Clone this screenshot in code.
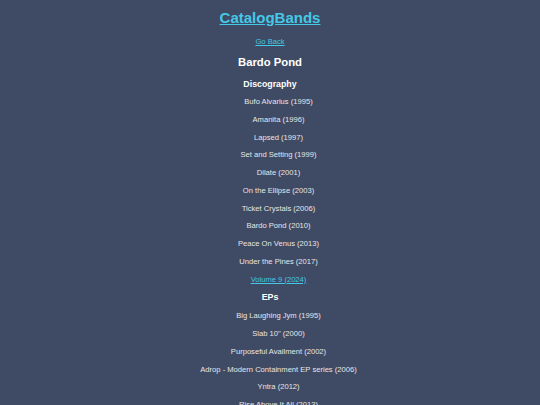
import React from "react";

const albums = [
  "Bufo Alvarius (1995)",
  "Amanita (1996)",
  "Lapsed (1997)",
  "Set and Setting (1999)",
  "Dilate (2001)",
  "On the Ellipse (2003)",
  "Ticket Crystals (2006)",
  "Bardo Pond (2010)",
  "Peace On Venus (2013)",
  "Under the Pines (2017)",
];

const eps = [
  "Big Laughing Jym (1995)",
  "Slab 10\" (2000)",
  "Purposeful Availment (2002)",
  "Adrop - Modern Containment EP series (2006)",
  "Yntra (2012)",
  "Rise Above It All (2013)",
];

const App = () => {
  return (
    <div className="min-h-[405px] bg-[#3f4a64] text-center font-['Liberation_Sans',Arial,sans-serif] text-[#e6e6e6]">
      <h1 className="h-[36px] leading-[36px] text-[15px] font-bold">
        <a href="#" className="text-[#45c8e6] underline">CatalogBands</a>
      </h1>
      <div className="h-[12px] leading-[12px] text-[7.6px]">
        <a href="#" className="text-[#45c8e6] underline">Go Back</a>
      </div>
      <h2 className="h-[28px] leading-[28px] text-[11.3px] font-bold text-white">Bardo Pond</h2>
      <h3 className="h-[17px] leading-[16px] text-[8.8px] font-bold text-white">Discography</h3>
      <ul className="pl-[17px]">
        {albums.map((a) => (
          <li key={a} className="h-[17.75px] leading-[17.75px] text-[7.6px]">{a}</li>
        ))}
        <li className="h-[17.75px] leading-[17.75px] text-[7.6px]">
          <a href="#" className="text-[#45c8e6] underline">Volume 9 (2024)</a>
        </li>
      </ul>
      <h3 className="h-[19px] leading-[19px] text-[8.8px] font-bold text-white">EPs</h3>
      <ul className="pl-[17px]">
        {eps.map((e) => (
          <li key={e} className="h-[17.75px] leading-[17.75px] text-[7.6px]">{e}</li>
        ))}
      </ul>
    </div>
  );
};

export default App;
